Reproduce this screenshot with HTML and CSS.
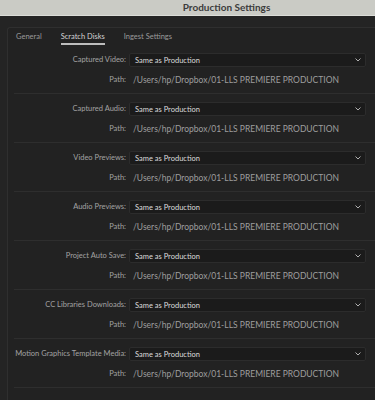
FILE: index.html
```html
<!DOCTYPE html>
<html lang="en">
<head>
    <meta charset="UTF-8">
    <meta name="viewport" content="width=device-width, initial-scale=1.0">
    <title>Production Settings</title>
    <link rel="stylesheet" href="styles.css">
</head>
<body>
    <!-- Title bar -->
    <header class="titlebar">Production Settings</header>

    <!-- Settings panel -->
    <div class="panel">
        <nav class="tabs">
            <span class="tab">General</span>
            <span class="tab active">Scratch Disks</span>
            <span class="tab">Ingest Settings</span>
        </nav>

        <div class="group">
            <span class="label">Captured Video:</span>
            <div class="select">Same as Production<svg class="chevron" viewBox="0 0 6 4"><polyline points="0.5,0.5 3,3 5.5,0.5"/></svg></div>
            <span class="label">Path:</span>
            <span class="path">/Users/hp/Dropbox/01-LLS PREMIERE PRODUCTION</span>
        </div>

        <div class="group">
            <span class="label">Captured Audio:</span>
            <div class="select">Same as Production<svg class="chevron" viewBox="0 0 6 4"><polyline points="0.5,0.5 3,3 5.5,0.5"/></svg></div>
            <span class="label">Path:</span>
            <span class="path">/Users/hp/Dropbox/01-LLS PREMIERE PRODUCTION</span>
        </div>

        <div class="group">
            <span class="label">Video Previews:</span>
            <div class="select">Same as Production<svg class="chevron" viewBox="0 0 6 4"><polyline points="0.5,0.5 3,3 5.5,0.5"/></svg></div>
            <span class="label">Path:</span>
            <span class="path">/Users/hp/Dropbox/01-LLS PREMIERE PRODUCTION</span>
        </div>

        <div class="group">
            <span class="label">Audio Previews:</span>
            <div class="select">Same as Production<svg class="chevron" viewBox="0 0 6 4"><polyline points="0.5,0.5 3,3 5.5,0.5"/></svg></div>
            <span class="label">Path:</span>
            <span class="path">/Users/hp/Dropbox/01-LLS PREMIERE PRODUCTION</span>
        </div>

        <div class="group">
            <span class="label">Project Auto Save:</span>
            <div class="select">Same as Production<svg class="chevron" viewBox="0 0 6 4"><polyline points="0.5,0.5 3,3 5.5,0.5"/></svg></div>
            <span class="label">Path:</span>
            <span class="path">/Users/hp/Dropbox/01-LLS PREMIERE PRODUCTION</span>
        </div>

        <div class="group">
            <span class="label">CC Libraries Downloads:</span>
            <div class="select">Same as Production<svg class="chevron" viewBox="0 0 6 4"><polyline points="0.5,0.5 3,3 5.5,0.5"/></svg></div>
            <span class="label">Path:</span>
            <span class="path">/Users/hp/Dropbox/01-LLS PREMIERE PRODUCTION</span>
        </div>

        <div class="group">
            <span class="label">Motion Graphics Template Media:</span>
            <div class="select">Same as Production<svg class="chevron" viewBox="0 0 6 4"><polyline points="0.5,0.5 3,3 5.5,0.5"/></svg></div>
            <span class="label">Path:</span>
            <span class="path">/Users/hp/Dropbox/01-LLS PREMIERE PRODUCTION</span>
        </div>
    </div>
</body>
</html>
```

FILE: styles.css
```css
* {
    margin: 0;
    padding: 0;
    box-sizing: border-box;
}

html, body {
    height: 100%;
    overflow: hidden;
}

body {
    font-family: Lato, "Liberation Sans", sans-serif;
    font-size: 7.5px;
    background-color: #242424;
    color: #a3a3a3;
}

/* Title bar */
.titlebar {
    height: 16px;
    line-height: 15px;
    background-color: #cacbc5;
    border-bottom: 1px solid #dcddd8;
    color: #3c3c3c;
    font-weight: bold;
    font-size: 10px;
    text-align: center;
    padding-left: 78px;
}

/* Panel */
.panel {
    margin: 11px 0 0 7px;
    width: 380px;
    height: 380px;
    border-top: 1px solid #2f2f2f;
    border-left: 1px solid #2f2f2f;
    border-top-left-radius: 3px;
    background-color: #222222;
    padding-top: 3px;
}

.tabs {
    display: flex;
    gap: 19px;
    padding-left: 8px;
    height: 14px;
}

.tab {
    line-height: 12px;
    height: 14px;
    color: #9a9a9a;
}

.tab.active {
    color: #d4d4d4;
    border-bottom: 2px solid #bdbdbd;
}

/* Setting groups */
.group {
    display: grid;
    grid-template-columns: 112px 237px;
    column-gap: 3px;
    row-gap: 7px;
    align-items: center;
    margin-left: 6px;
    padding: 8px 0 7px;
    border-bottom: 1px solid #2e2e2e;
}

.label {
    text-align: right;
    white-space: nowrap;
    line-height: 12px;
}

.select {
    display: flex;
    align-items: center;
    justify-content: space-between;
    height: 14px;
    padding: 0 4px 0 5px;
    background-color: #1b1b1b;
    border: 1px solid #2c2c2c;
    border-radius: 2px;
    color: #dcdcdc;
}

.chevron {
    width: 6px;
    height: 4px;
    fill: none;
    stroke: #b0b0b0;
    stroke-width: 1;
}

.path {
    padding-left: 4px;
    font-size: 8.5px;
    line-height: 12px;
    white-space: nowrap;
    color: #9e9e9e;
}
```
